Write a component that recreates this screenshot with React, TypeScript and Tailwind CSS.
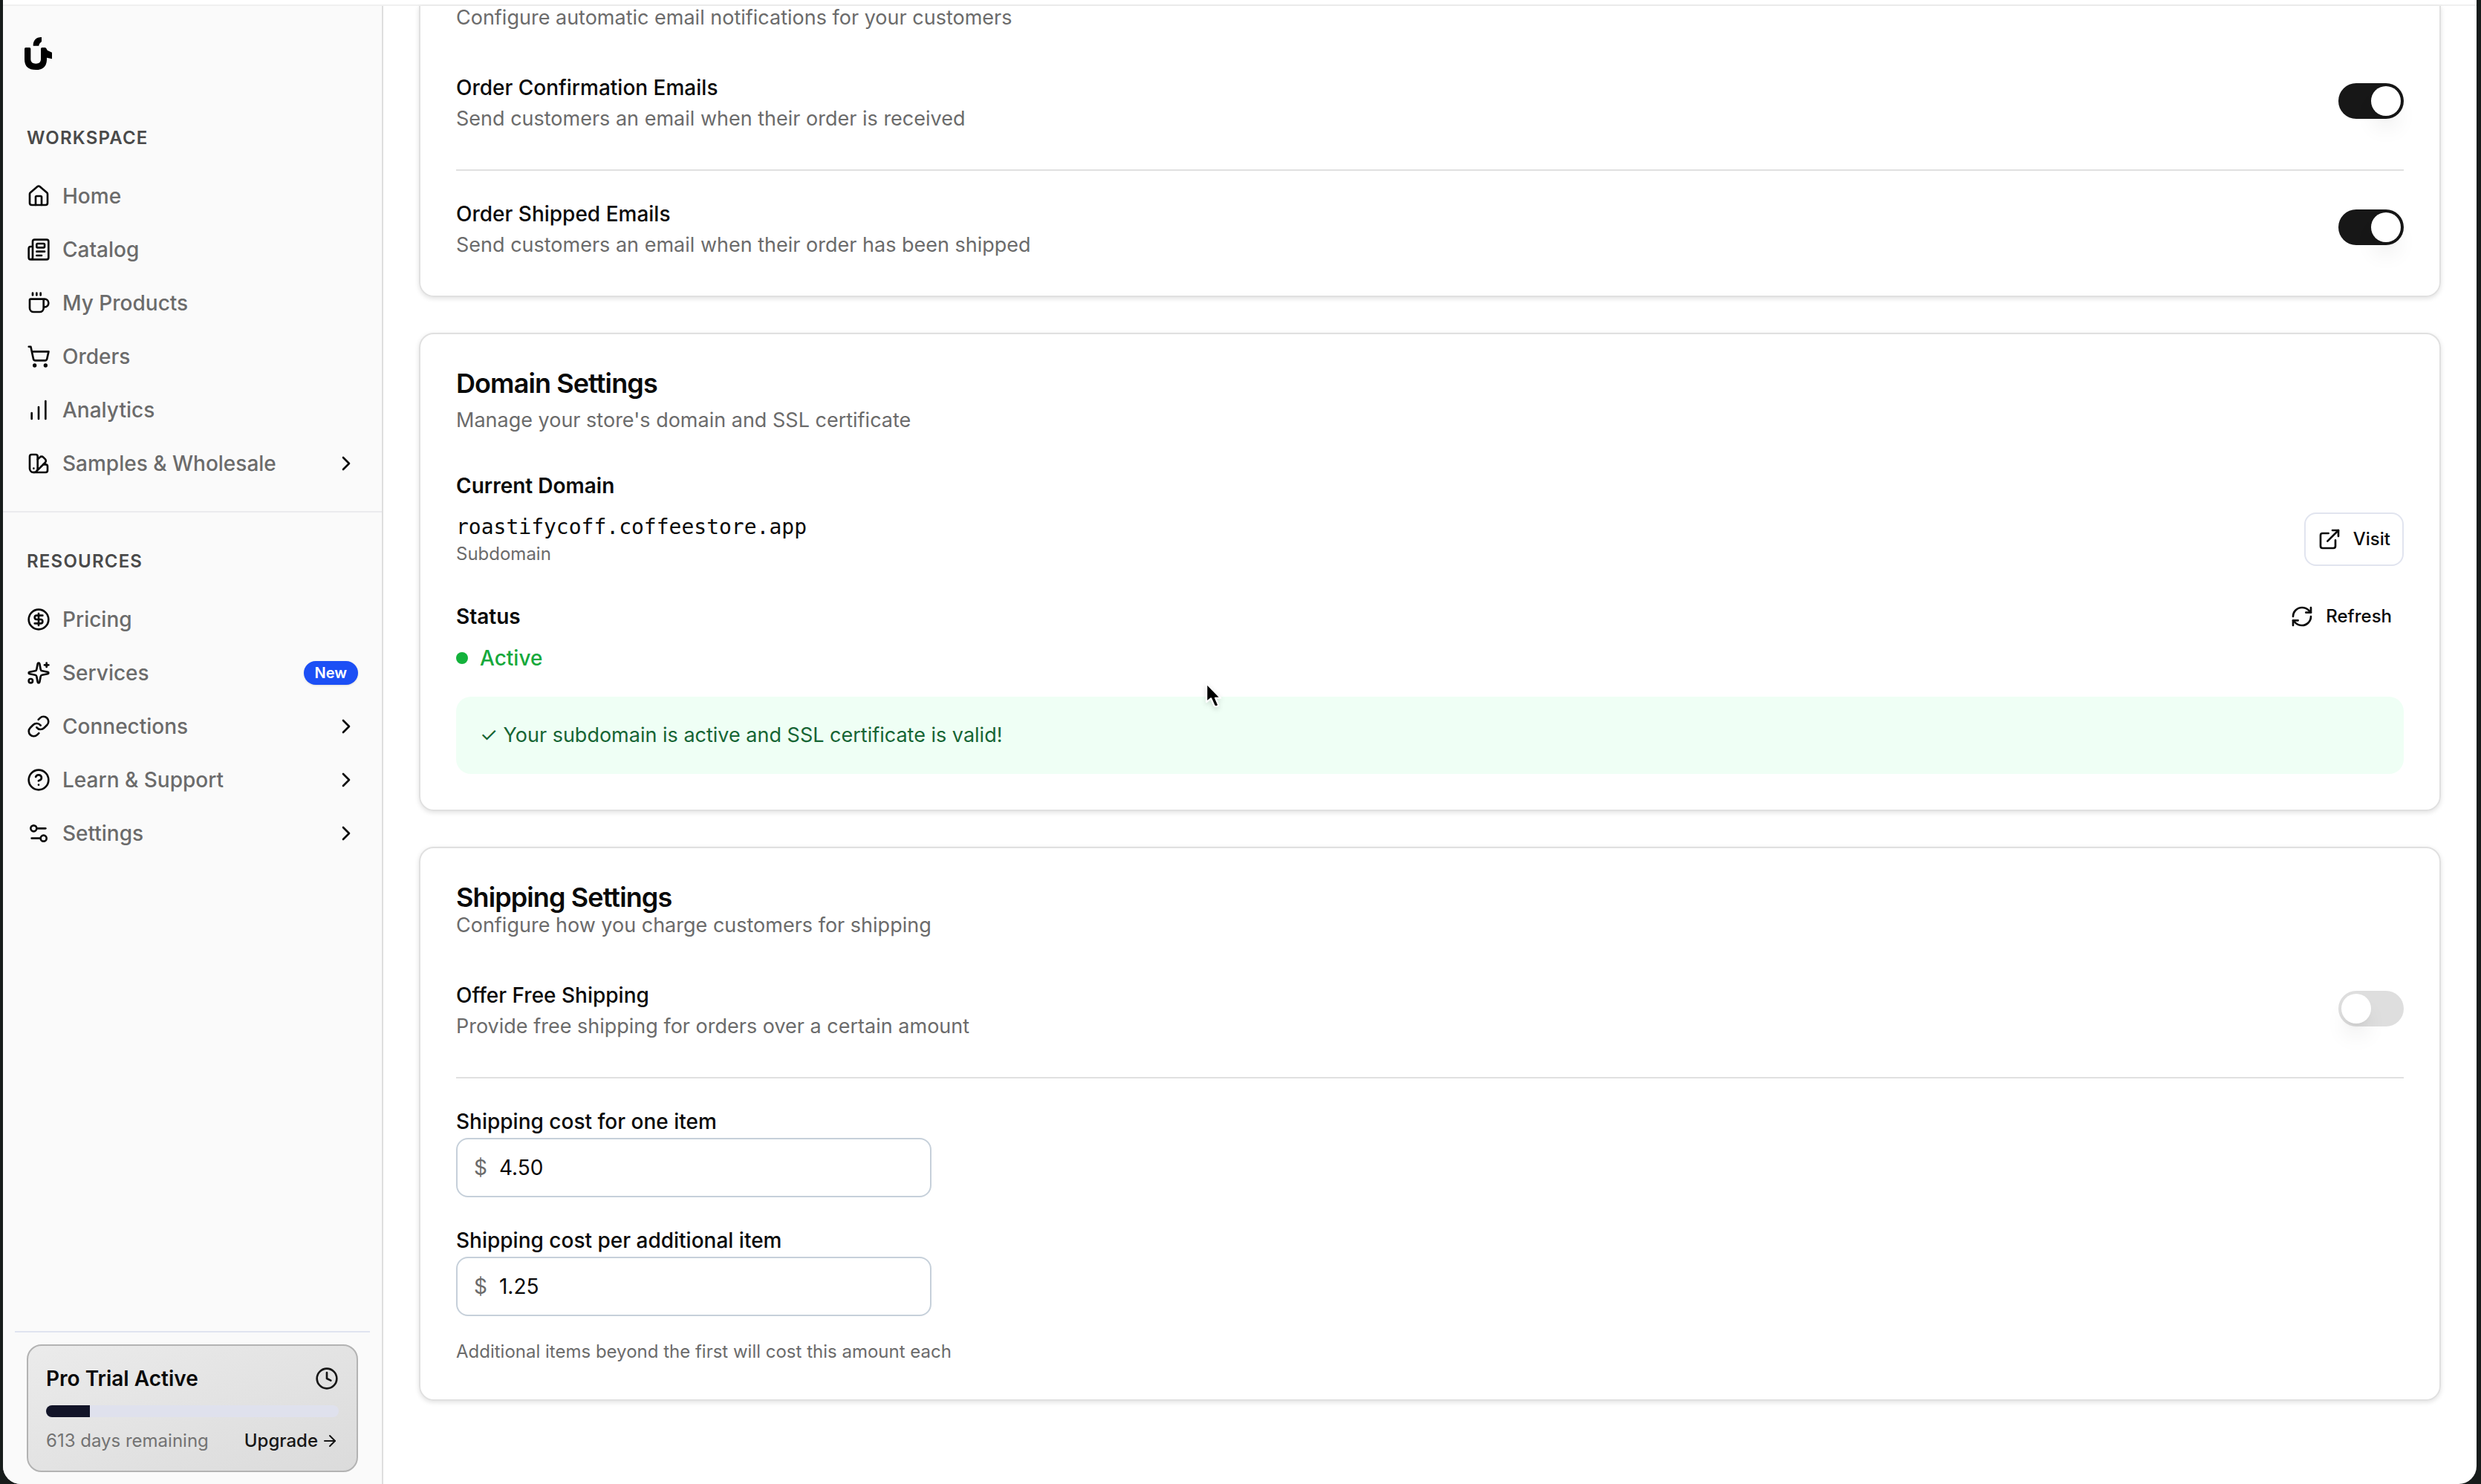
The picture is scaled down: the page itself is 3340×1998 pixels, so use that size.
import { useState } from 'react';
import {
  House, Newspaper, Coffee, ShoppingCart, ChartNoAxesColumnIncreasing, SwatchBook,
  CircleDollarSign, Sparkles, Link, CircleQuestionMark, Settings2, ChevronRight,
  Clock, ArrowRight, ExternalLink, RefreshCw, type LucideIcon
} from 'lucide-react';

type NavItem = { label: string; icon: LucideIcon; href?: string; badge?: string };

const WORKSPACE: NavItem[] = [
  { label: 'Home', icon: House, href: '#home' },
  { label: 'Catalog', icon: Newspaper, href: '#catalog' },
  { label: 'My Products', icon: Coffee, href: '#products' },
  { label: 'Orders', icon: ShoppingCart, href: '#orders' },
  { label: 'Analytics', icon: ChartNoAxesColumnIncreasing, href: '#analytics' },
  { label: 'Samples & Wholesale', icon: SwatchBook },
];

const RESOURCES: NavItem[] = [
  { label: 'Pricing', icon: CircleDollarSign, href: '#pricing' },
  { label: 'Services', icon: Sparkles, href: '#services', badge: 'New' },
  { label: 'Connections', icon: Link },
  { label: 'Learn & Support', icon: CircleQuestionMark },
  { label: 'Settings', icon: Settings2 },
];

function Logo() {
  return (
    <svg viewBox="0 0 111 132" className="h-11 w-[37px]" fill="#000" role="img" aria-label="Roastify">
      <path d="M35 35C34 14 46 0 69 0V16C69 22 60 22 58 35Z" />
      <path d="M0 47Q0 42 5 42H20Q25 42 25 47V90Q25 107 46 107Q66 107 66 90V47Q66 42 71 42H82Q87 42 89 47L92 53L111 62V88L90 83V92Q88 132 46 132Q0 132 0 90Z" />
    </svg>
  );
}

function NavGroup({ title, items }: { title: string; items: NavItem[] }) {
  return (
    <div className="px-8">
      <h2 className="text-2xl leading-8 font-semibold tracking-wider text-[#4a4a4a]">{title}</h2>
      <ul className="mt-[26px]">
        {items.map((item) => {
          const content = (
            <>
              <item.icon className="size-8 shrink-0 text-[#0a0a0a]" />
              <span>{item.label}</span>
            </>
          );
          return (
            <li key={item.label}>
              {item.href ? (
                <a href={item.href} className="flex h-18 items-center gap-4">
                  {content}
                  {item.badge && (
                    <span className="ml-auto flex h-8 items-center rounded-full bg-[#1c4ff5] px-[15px] text-xl font-semibold text-white shadow-sm">
                      {item.badge}
                    </span>
                  )}
                </a>
              ) : (
                <button type="button" className="flex h-18 w-full items-center gap-4">
                  {content}
                  <ChevronRight className="ml-auto size-8 text-[#0a0a0a]" />
                </button>
              )}
            </li>
          );
        })}
      </ul>
    </div>
  );
}

function TrialCard({ days, progress }: { days: number; progress: number }) {
  return (
    <div className="mx-8 mt-4 rounded-[20px] border-2 border-[#b3b3b3] bg-linear-to-br from-[#ebebeb] to-[#dbdbdb] p-6">
      <div className="flex h-10 items-center justify-between">
        <span className="font-semibold text-[#0a0a0a]">Pro Trial Active</span>
        <Clock className="size-8 text-[#171717]" />
      </div>
      <div className="mt-4 h-4 overflow-hidden rounded-full bg-[#dfe1ed]">
        <div className="h-full bg-[#121428]" style={{ width: `${progress}%` }} />
      </div>
      <div className="mt-4 flex items-center justify-between text-2xl leading-8">
        <span className="text-[#737373]">{days} days remaining</span>
        <a href="#upgrade" className="flex items-center gap-1 font-medium text-[#171717]">
          Upgrade
          <ArrowRight className="size-6" />
        </a>
      </div>
    </div>
  );
}

function SwitchRow({ id, title, description, defaultOn }: { id: string; title: string; description: string; defaultOn: boolean }) {
  const [on, setOn] = useState(defaultOn);
  return (
    <div className="flex h-22 items-center justify-between">
      <div className="flex h-full flex-col justify-end gap-0.5">
        <label htmlFor={id} className="font-medium text-[#0a0a0a]">{title}</label>
        <p className="text-[27px]">{description}</p>
      </div>
      <input
        id={id}
        type="checkbox"
        role="switch"
        checked={on}
        onChange={(e) => setOn(e.target.checked)}
        className="flex h-12 w-22 cursor-pointer appearance-none items-center rounded-full bg-[#dedede] p-1 before:size-10 before:rounded-full before:bg-white before:shadow-[0_20px_30px_-6px_rgba(0,0,0,0.1),0_8px_12px_-8px_rgba(0,0,0,0.1)] checked:justify-end checked:bg-[#171717]"
      />
    </div>
  );
}

function MoneyField({ id, label, value }: { id: string; label: string; value: string }) {
  return (
    <div className="mt-9">
      <label htmlFor={id} className="block leading-11 font-medium text-[#0a0a0a]">{label}</label>
      <div className="flex h-20 w-full max-w-160 items-center gap-4 rounded-2xl border-2 border-[#c6d0da] bg-white px-[22px]">
        <span>$</span>
        <input id={id} type="text" inputMode="decimal" defaultValue={value} className="w-full min-w-0 text-[#0a0a0a] outline-none" />
      </div>
    </div>
  );
}

export default function App() {
  return (
    <div className="h-screen bg-[#171c1b] pr-1.5 pl-1 font-[Inter,sans-serif] text-[28px] leading-10 text-[#6b6b6b]">
      <div className="flex h-full flex-col overflow-hidden rounded-b-3xl bg-white">
        <header className="h-2 shrink-0 border-b-2 border-[#f0f0f0] bg-white" />

        <div className="flex min-h-0 flex-1">
          {/* Sidebar */}
          <aside className="flex w-128 shrink-0 flex-col border-r-2 border-[#dedede] bg-[#fafafa] pb-4 font-medium">
            <a href="#home" className="mt-[42px] mb-19 ml-[29px] self-start">
              <Logo />
            </a>
            <nav>
              <NavGroup title="WORKSPACE" items={WORKSPACE} />
              <hr className="mt-7 mb-[50px] border-t-2 border-[#ebebee]" />
              <NavGroup title="RESOURCES" items={RESOURCES} />
            </nav>
            <div className="mt-auto font-normal">
              <hr className="mx-4 border-t-2 border-[#e0e3f0]" />
              <TrialCard days={613} progress={15} />
            </div>
          </aside>

          {/* Settings */}
          <main className="flex min-w-0 flex-1 flex-col gap-12 px-12">
            <section className="rounded-b-[20px] border-2 border-t-0 border-[#e0e0e0] px-12 pb-12 shadow-[0_2px_6px_rgba(0,0,0,0.12)]">
              <p className="mb-13 text-[27px] leading-8">Configure automatic email notifications for your customers</p>
              <SwitchRow id="order-confirmation" title="Order Confirmation Emails" description="Send customers an email when their order is received" defaultOn />
              <hr className="mt-12 mb-8 border-t-2 border-[#e0e0e0]" />
              <SwitchRow id="order-shipped" title="Order Shipped Emails" description="Send customers an email when their order has been shipped" defaultOn />
            </section>

            <section className="rounded-[20px] border-2 border-[#e0e0e0] p-12 shadow-[0_2px_6px_rgba(0,0,0,0.12)]">
              <h2 className="text-4xl leading-9 font-semibold tracking-tight text-[#0a0a0a]">Domain Settings</h2>
              <p className="mt-3 text-[27px]">Manage your store's domain and SSL certificate</p>

              <h3 className="mt-12 font-semibold text-[#0a0a0a]">Current Domain</h3>
              <div className="mt-4 flex items-center justify-between">
                <div>
                  <p className="font-['DejaVu_Sans_Mono',monospace] text-[#0a0a0a]">roastifycoff.coffeestore.app</p>
                  <p className="text-2xl leading-8">Subdomain</p>
                </div>
                <button type="button" className="flex h-18 items-center gap-4 rounded-2xl border-2 border-[#e1e4ef] px-4 text-2xl font-medium text-[#0a0a0a]">
                  <ExternalLink className="size-8" />
                  Visit
                </button>
              </div>

              <div className="mt-8 flex items-center justify-between">
                <h3 className="font-semibold text-[#0a0a0a]">Status</h3>
                <button type="button" className="flex h-18 items-center gap-4 px-4 text-2xl font-medium text-[#0a0a0a]">
                  <RefreshCw className="size-8" />
                  Refresh
                </button>
              </div>
              <div className="flex items-center gap-4 text-[#16a93c]">
                <span className="size-4 rounded-full bg-[#13b23b]" />
                <span className="font-medium">Active</span>
              </div>
              <div className="mt-8 rounded-[20px] bg-[#effff5] p-8 text-[27px] leading-10 text-[#166534]">
                ✓ Your subdomain is active and SSL certificate is valid!
              </div>
            </section>

            <section className="rounded-[20px] border-2 border-[#e0e0e0] p-12 shadow-[0_2px_6px_rgba(0,0,0,0.12)]">
              <h2 className="text-4xl leading-9 font-semibold tracking-tight text-[#0a0a0a]">Shipping Settings</h2>
              <p className="mb-12 text-[27px]">Configure how you charge customers for shipping</p>
              <SwitchRow id="free-shipping" title="Offer Free Shipping" description="Provide free shipping for orders over a certain amount" defaultOn={false} />
              <hr className="mt-12 border-t-2 border-[#e0e0e0]" />
              <MoneyField id="first-item" label="Shipping cost for one item" value="4.50" />
              <MoneyField id="additional-item" label="Shipping cost per additional item" value="1.25" />
              <p className="mt-8 text-2xl leading-8">Additional items beyond the first will cost this amount each</p>
            </section>
          </main>
        </div>
      </div>

      {/* Mouse pointer */}
      <svg viewBox="0 0 24 36" className="pointer-events-none absolute top-[917px] left-[1621px] h-[39px] w-[26px] drop-shadow-md" aria-hidden="true">
        <path d="M3 3V26L8.5 21.500L12.500 30.500Q15 33 18 30L14 21H20.500Z" fill="#000" stroke="#fff" strokeWidth="2" strokeLinejoin="round" />
      </svg>
    </div>
  );
}
